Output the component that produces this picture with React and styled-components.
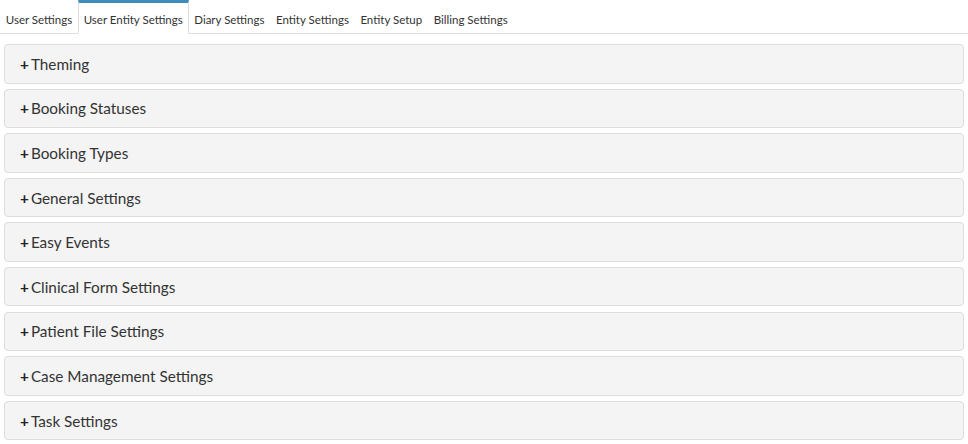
import React from "react";
import styled, { createGlobalStyle } from "styled-components";

const GlobalStyle = createGlobalStyle`
  body {
    margin: 0;
    background: #fff;
    font-family: "Source Sans Pro", Lato, "Open Sans", sans-serif;
    color: #333;
  }
`;

const TabBar = styled.ul`
  display: flex;
  margin: 0;
  padding: 0;
  list-style: none;
  height: 33px;
  border-bottom: 1px solid #ddd;
`;

const Tab = styled.li`
  display: flex;
  align-items: center;
  padding: 3px 4.75px 0 4.75px;
  margin-bottom: -1px;
  font-size: 11.5px;
  color: #333;
  background: ${(p) => (p.active ? "#fff" : "transparent")};
  border-left: 1px solid ${(p) => (p.active ? "#ddd" : "transparent")};
  border-right: 1px solid ${(p) => (p.active ? "#ddd" : "transparent")};
  border-top: 3px solid ${(p) => (p.active ? "#3c8dbc" : "transparent")};
  border-bottom: 1px solid ${(p) => (p.active ? "#fff" : "transparent")};
  cursor: pointer;
`;

const Panels = styled.div`
  padding: 10px 4px 0 4px;
`;

const Panel = styled.div`
  height: 39.5px;
  box-sizing: border-box;
  margin-bottom: 5.1px;
  display: flex;
  align-items: center;
  padding-left: 15px;
  background: #f4f4f4;
  border: 1px solid #ddd;
  border-radius: 4px;
  font-size: 15.3px;
  color: #333;
`;

const Plus = styled.span`
  font-weight: 700;
  margin-right: 2px;
  color: #222;
`;

const tabs = [
  "User Settings",
  "User Entity Settings",
  "Diary Settings",
  "Entity Settings",
  "Entity Setup",
  "Billing Settings",
];

const sections = [
  "Theming",
  "Booking Statuses",
  "Booking Types",
  "General Settings",
  "Easy Events",
  "Clinical Form Settings",
  "Patient File Settings",
  "Case Management Settings",
  "Task Settings",
];

export default function App() {
  return (
    <>
      <GlobalStyle />
      <TabBar>
        {tabs.map((t, i) => (
          <Tab key={t} active={i === 1}>
            {t}
          </Tab>
        ))}
      </TabBar>
      <Panels>
        {sections.map((s) => (
          <Panel key={s}>
            <Plus>+</Plus>
            {s}
          </Panel>
        ))}
      </Panels>
    </>
  );
}
